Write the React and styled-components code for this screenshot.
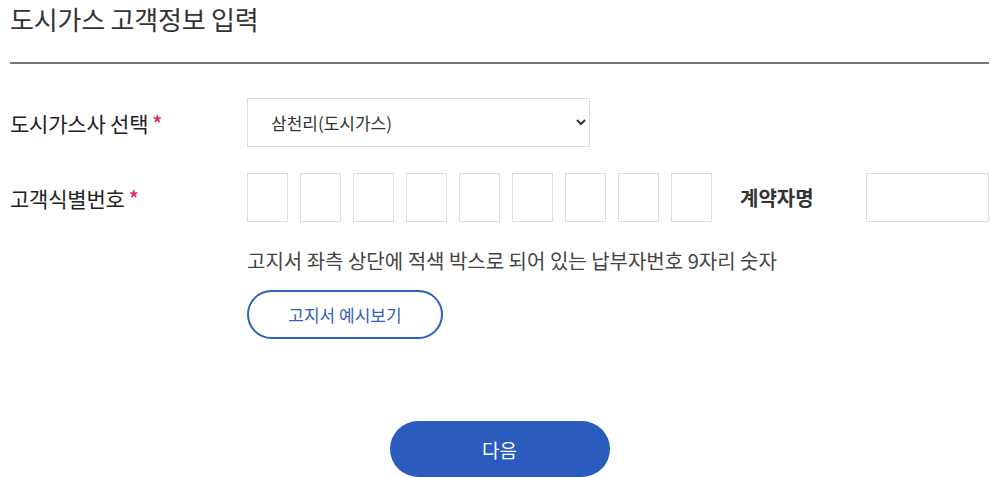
import styled, { createGlobalStyle } from "styled-components";

const GlobalStyle = createGlobalStyle`
  body {
    margin: 0;
    background: #fff;
    font-family: "Noto Sans CJK KR", "Noto Sans", sans-serif;
    color: #333;
  }
`;

const Wrapper = styled.div`
  width: 991px;
  height: 478px;
  padding: 0 2px 0 10px;
  box-sizing: border-box;
  overflow: hidden;
`;

const Title = styled.h2`
  margin: 0;
  padding-top: 2px;
  height: 64px;
  box-sizing: border-box;
  font-size: 26px;
  line-height: 34px;
  font-weight: 400;
  letter-spacing: -0.2px;
  color: #333;
  border-bottom: 2px solid #777;
`;

const Form = styled.div`
  padding-top: 34px;
`;

const Row = styled.div`
  display: flex;
  align-items: center;
  margin-bottom: ${(p) => p.gap || 0}px;
`;

const Label = styled.div`
  width: 237px;
  flex-shrink: 0;
  font-size: 21px;
  font-weight: 400;
  color: #222;
  letter-spacing: -0.2px;
`;

const Star = styled.span`
  color: #e0245e;
  margin-left: 4px;
  font-weight: 500;
`;

const Select = styled.select`
  width: 343px;
  height: 49px;
  border: 1px solid #ddd;
  background: #fff;
  padding: 0 10px 0 19px;
  font-family: inherit;
  font-size: 17px;
  color: #333;
  outline: none;
`;

const Digits = styled.div`
  display: flex;
  gap: 12px;
`;

const Digit = styled.input`
  width: 41px;
  height: 49px;
  box-sizing: border-box;
  border: 1px solid #ddd;
  padding: 0;
  outline: none;
`;

const SubLabel = styled.div`
  margin-left: 28px;
  width: 126px;
  font-size: 20px;
  font-weight: 700;
  color: #333;
`;

const NameInput = styled.input`
  width: 123px;
  height: 49px;
  box-sizing: border-box;
  border: 1px solid #ddd;
  outline: none;
`;

const Help = styled.div`
  margin: 23px 0 0 237px;
  font-size: 20px;
  line-height: 32px;
  color: #444;
`;

const SampleButton = styled.button`
  margin: 13px 0 0 237px;
  width: 196px;
  height: 49px;
  border: 2px solid #2f5fbf;
  border-radius: 25px;
  background: #fff;
  color: #2f5fbf;
  font-family: inherit;
  font-size: 17px;
  cursor: pointer;
`;

const Actions = styled.div`
  display: flex;
  justify-content: center;
  margin-top: 82px;
`;

const NextButton = styled.button`
  width: 220px;
  height: 56px;
  border: none;
  border-radius: 28px;
  background: #2a5bbd;
  color: #fff;
  font-family: inherit;
  font-size: 19px;
  cursor: pointer;
`;

export default function App() {
  return (
    <Wrapper>
      <GlobalStyle />
      <Title>도시가스 고객정보 입력</Title>
      <Form>
        <Row gap={26}>
          <Label>
            도시가스사 선택<Star>*</Star>
          </Label>
          <Select defaultValue="samchully">
            <option value="samchully">삼천리(도시가스)</option>
          </Select>
        </Row>
        <Row>
          <Label>
            고객식별번호<Star>*</Star>
          </Label>
          <Digits>
            {Array.from({ length: 9 }).map((_, i) => (
              <Digit key={i} maxLength={1} />
            ))}
          </Digits>
          <SubLabel>계약자명</SubLabel>
          <NameInput />
        </Row>
        <Help>고지서 좌측 상단에 적색 박스로 되어 있는 납부자번호 9자리 숫자</Help>
        <SampleButton>고지서 예시보기</SampleButton>
        <Actions>
          <NextButton>다음</NextButton>
        </Actions>
      </Form>
    </Wrapper>
  );
}
